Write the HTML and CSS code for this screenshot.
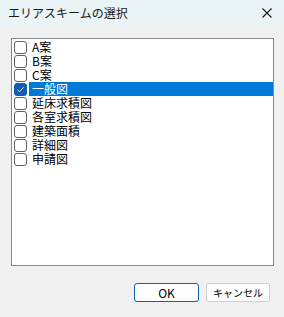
FILE: index.html
```html
<!DOCTYPE html>
<html lang="ja">
<head>
<meta charset="utf-8">
<title>エリアスキームの選択</title>
<link rel="stylesheet" href="styles.css">
</head>
<body>
	<div class="dialog">
		<div class="titlebar">
			<span class="title">エリアスキームの選択</span>
			<svg class="close" width="10" height="10" viewBox="0 0 10 10">
				<path d="M0.5 0.5 L9.5 9.5 M9.5 0.5 L0.5 9.5" stroke="#1a1a1a" stroke-width="1.1" fill="none"/>
			</svg>
		</div>
		<div class="content">
			<ul class="list">
				<li><span class="box"></span><span class="label">A案</span></li>
				<li><span class="box"></span><span class="label">B案</span></li>
				<li><span class="box"></span><span class="label">C案</span></li>
				<li class="selected">
					<span class="box checked">
						<svg width="9" height="9" viewBox="0 0 9 9"><path d="M1.5 4.8 L3.6 6.8 L7.6 2.2" stroke="#cfe0f3" stroke-width="1" fill="none"/></svg>
					</span>
					<span class="label">一般図</span>
				</li>
				<li><span class="box"></span><span class="label">延床求積図</span></li>
				<li><span class="box"></span><span class="label">各室求積図</span></li>
				<li><span class="box"></span><span class="label">建築面積</span></li>
				<li><span class="box"></span><span class="label">詳細図</span></li>
				<li><span class="box"></span><span class="label">申請図</span></li>
			</ul>
			<div class="buttons">
				<button class="btn default">OK</button>
				<button class="btn cancel">キャンセル</button>
			</div>
		</div>
	</div>
</body>
</html>
```

FILE: styles.css
```css
* {
	box-sizing: border-box;
}
html, body {
	margin: 0;
	padding: 0;
	background: #f0f0f0;
	font-family: "Noto Sans CJK JP", "Noto Sans", sans-serif;
	font-size: 12px;
	color: #000;
}
.dialog {
	width: 284px;
	height: 317px;
	display: flex;
	flex-direction: column;
	background: #f0f0f0;
}
.titlebar {
	height: 25px;
	background: #eaf3f5;
	display: flex;
	align-items: center;
	justify-content: space-between;
	padding: 0 12px 0 8px;
}
.title {
	font-size: 12px;
	color: #1a1a1a;
}
.content {
	flex: 1;
	display: flex;
	flex-direction: column;
	padding: 13px 10px 0 11px;
}
.list {
	list-style: none;
	margin: 0;
	padding: 1px 0 0 1px;
	width: 263px;
	height: 228px;
	background: #fff;
	border: 1px solid #828790;
}
.list li {
	height: 14px;
	display: flex;
	align-items: center;
	line-height: 14px;
}
.box {
	width: 13px;
	height: 13px;
	margin-left: 1px;
	border: 1px solid #5f5f5f;
	border-radius: 3px;
	background: #fff;
	display: flex;
	align-items: center;
	justify-content: center;
}
.box.checked {
	background: #0f5eb3;
	border-color: #0f5eb3;
}
.label {
	flex: 1;
	height: 14px;
	margin-left: 2px;
	padding-left: 3px;
	font-size: 12px;
}
.selected .label {
	background: #0078d7;
	color: #fff;
}
.buttons {
	display: flex;
	justify-content: flex-end;
	gap: 7px;
	padding-top: 17px;
	padding-right: 4px;
}
.btn {
	width: 65px;
	height: 19px;
	padding: 0;
	font-family: "Noto Sans CJK JP", "Noto Sans", sans-serif;
	font-size: 12px;
	line-height: 16px;
	color: #000;
	background: #fdfdfd;
	border: 1px solid #d0d0d0;
	border-radius: 3px;
}
.btn.cancel {
	width: 64px;
	font-size: 10px;
}
.btn.default {
	border: 1px solid #0067c0;
}
```
